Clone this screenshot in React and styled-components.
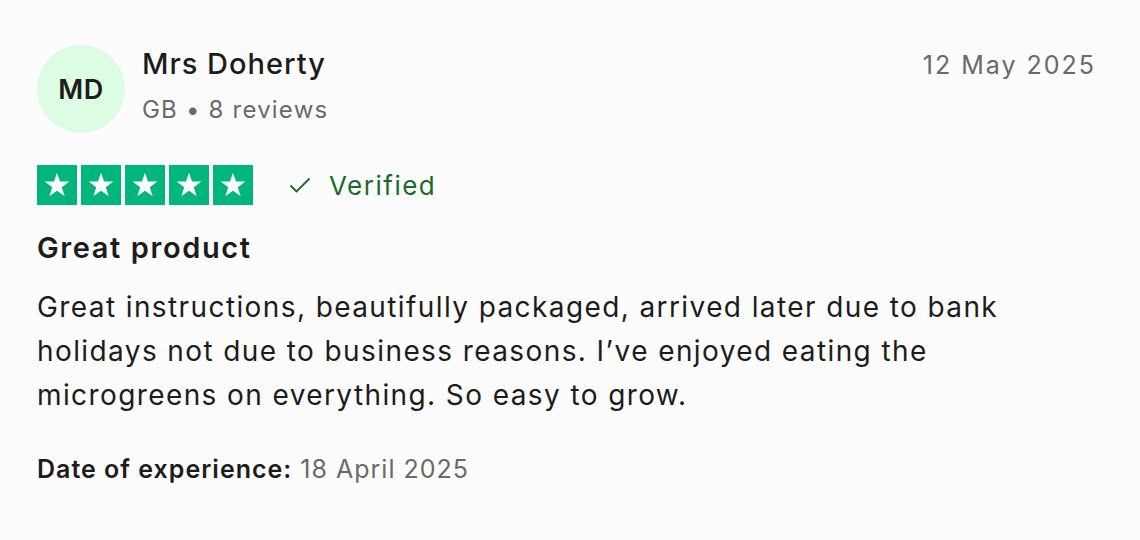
import React from 'react'
import styled, { createGlobalStyle } from 'styled-components'

const GlobalStyle = createGlobalStyle`
  body {
    margin: 0;
    background: #fcfcfc;
    font-family: Inter, "Liberation Sans", Arial, sans-serif;
  }
`

const Card = styled.article`
  width: 1140px;
  height: 540px;
  box-sizing: border-box;
  padding: 45px 44px 0 37px;
  color: #1c1c1c;
`

const Header = styled.header`
  display: flex;
  align-items: flex-start;
  justify-content: space-between;
`

const Consumer = styled.div`
  display: flex;
  align-items: center;
  gap: 17px;
`

const Avatar = styled.div`
  width: 88px;
  height: 88px;
  border-radius: 50%;
  background: #dcfce4;
  display: flex;
  align-items: center;
  justify-content: center;
  font-size: 27px;
  font-weight: 600;
  letter-spacing: 0.5px;
  color: #1c1c1c;
`

const Info = styled.div`
  display: flex;
  flex-direction: column;
  gap: 11px;
  margin-top: -7px;
`

const Name = styled.span`
  font-size: 29px;
  font-weight: 500;
  line-height: 38px;
  letter-spacing: 1px;
`

const Meta = styled.span`
  font-size: 24px;
  line-height: 32px;
  letter-spacing: 1.2px;
  color: #6b6a66;
`

const PostDate = styled.time`
  font-size: 25px;
  line-height: 40px;
  letter-spacing: 2px;
  color: #6b6a66;
`

const RatingRow = styled.div`
  display: flex;
  align-items: center;
  gap: 36px;
  margin-top: 32px;
`

const Stars = styled.div`
  display: flex;
  gap: 4px;
`

const StarBox = styled.span`
  width: 40px;
  height: 40px;
  background: ${p => (p.$on ? '#00b67a' : '#dcdce6')};
  display: flex;
  align-items: center;
  justify-content: center;
`

const Verified = styled.span`
  display: flex;
  align-items: center;
  gap: 18px;
  font-size: 26px;
  letter-spacing: 1.5px;
  color: #1a6b2a;
`

const Title = styled.h2`
  margin: 24px 0 0;
  font-size: 29px;
  font-weight: 600;
  line-height: 38px;
  letter-spacing: 1.6px;
`

const Body = styled.p`
  margin: 18px 0 0;
  max-width: 1040px;
  font-size: 28px;
  line-height: 44px;
  letter-spacing: 1.4px;
`

const Experience = styled.p`
  margin: 36px 0 0;
  font-size: 25px;
  line-height: 32px;
  letter-spacing: 1px;
  color: #6b6a66;

  b {
    font-weight: 600;
    color: #1c1c1c;
  }
`

const Star = () => (
  <svg width='28' height='28' viewBox='0 0 24 24'>
    <path
      fill='#fff'
      d='M12 1.5l2.6 7.6h8l-6.5 4.8 2.5 7.7L12 16.9l-6.6 4.7 2.5-7.7L1.4 9.1h8z'
    />
  </svg>
)

const Check = () => (
  <svg width='22' height='16' viewBox='0 0 22 16' fill='none'>
    <path d='M1.5 8.5l6 6L20.5 1.5' stroke='#1a6b2a' strokeWidth='1.8' />
  </svg>
)

const App = () => (
  <>
    <GlobalStyle />
    <Card>
      <Header>
        <Consumer>
          <Avatar>MD</Avatar>
          <Info>
            <Name>Mrs Doherty</Name>
            <Meta>GB • 8 reviews</Meta>
          </Info>
        </Consumer>
        <PostDate>12 May 2025</PostDate>
      </Header>
      <RatingRow>
        <Stars>
          {[1, 2, 3, 4, 5].map(i => (
            <StarBox key={i} $on>
              <Star />
            </StarBox>
          ))}
        </Stars>
        <Verified>
          <Check />
          Verified
        </Verified>
      </RatingRow>
      <Title>Great product</Title>
      <Body>
        Great instructions, beautifully packaged, arrived later due to bank
        holidays not due to business reasons. I’ve enjoyed eating the
        microgreens on everything. So easy to grow.
      </Body>
      <Experience>
        <b>Date of experience:</b> 18 April 2025
      </Experience>
    </Card>
  </>
)

export default App
